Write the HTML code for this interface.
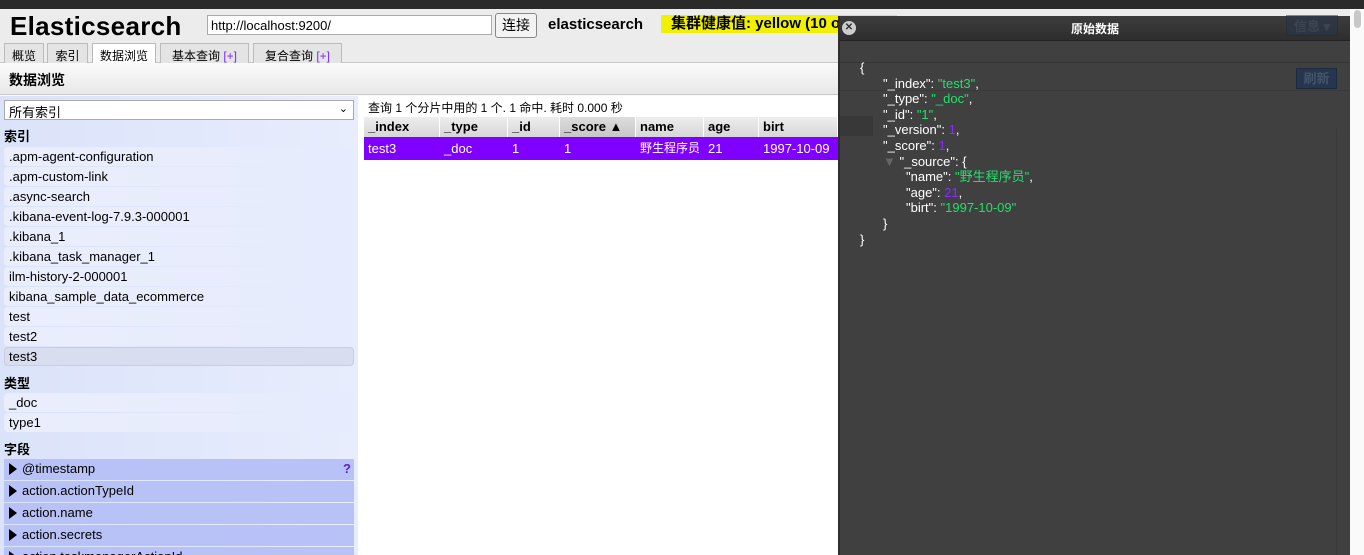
<!DOCTYPE html>
<html><head><meta charset="utf-8"><style>
*{box-sizing:border-box;margin:0;padding:0}
html,body{width:1364px;height:555px;overflow:hidden}
body{position:relative;background:#fafafa;font-family:"Liberation Sans","Noto Sans CJK SC",sans-serif;font-size:13px;color:#000;white-space:nowrap}
.topbar{position:absolute;left:0;top:0;width:1364px;height:9px;background:#2a2a2a}
.head{position:absolute;left:0;top:9px;width:1350px;height:54px;background:#ececec;border-bottom:1px solid #c8c8c8}
.logo{position:absolute;left:10px;top:2px;font-size:26px;font-weight:bold;letter-spacing:0.3px}
.url{position:absolute;left:207px;top:6px;width:285px;height:20px;border:1px solid #aaa;background:#fff;font-size:13px;padding:2px 3px}
.btn{position:absolute;left:495px;top:4px;width:42px;height:25px;border:1px solid #888;border-radius:3px;background:#f3f3f3;font-size:14px;text-align:center;line-height:23px}
.cname{position:absolute;left:548px;top:7px;font-size:15px;font-weight:bold}
.health{position:absolute;left:661px;top:6px;width:236px;height:18px;background:#f0f000;font-size:15px;font-weight:bold;padding-left:10px;line-height:18px;overflow:hidden}
.tabs{position:absolute;top:34px;left:4px;height:20px}
.tab{position:absolute;top:0;height:21px;border:1px solid #bbb;border-bottom:none;background:#e4e4e4;font-size:12px;padding:3px 0 0;text-align:center}
.tab.on{background:#fff;height:22px}
.tab b{font-weight:normal;color:#7a28ff}
.sub{position:absolute;left:0;top:63px;width:1350px;height:32px;background:linear-gradient(#fafafa,#e8e8e8);border-bottom:1px solid #c8c8c8}
.sub span{position:absolute;left:9px;top:7px;font-size:14px;font-weight:bold}
.side{position:absolute;left:0;top:96px;width:358px;height:459px;background:linear-gradient(90deg,#dbe3fa,#e8edfd);overflow:hidden}
.sel{position:absolute;left:4px;top:4px;width:350px;height:20px;border:1px solid #aaa;background:#fff;font-size:13px;padding:1px 4px}
.sel i{position:absolute;right:5px;top:1px;font-style:normal;font-size:11px}
.lab{position:absolute;left:4px;font-size:13px;font-weight:bold}
.it{position:absolute;left:4px;width:350px;height:19px;border-radius:4px;background:linear-gradient(90deg,#eaeefc,#e6ebfd);padding:2px 5px;font-size:13px}
.it.s{background:#d8ddef;border:1px solid #ccd;padding:1px 4px}
.f{position:absolute;left:4px;width:350px;height:21px;background:#b8c2f7;padding:2px 5px;font-size:13px}
.f:before{content:"";display:inline-block;border-left:8px solid #000;border-top:6px solid transparent;border-bottom:6px solid transparent;margin-right:5px;vertical-align:-2px}
.main{position:absolute;left:358px;top:96px;width:480px;height:459px;background:#fff}
.info{position:absolute;left:368px;top:99px;font-size:12px}
.th{position:absolute;top:117px;height:20px;background:linear-gradient(#eee,#d6d6d6);border-right:1px solid #fff;font-weight:bold;font-size:13px;padding:2px 4px;overflow:hidden}
.td{position:absolute;top:137px;height:23px;background:#8000ff;color:#fff;font-size:13px;padding:4px 4px;line-height:15px;overflow:hidden}
.dlg{position:absolute;left:838px;top:16px;width:512px;height:539px;background:#404040;border-left:2px solid #2e2e2e}
.dt{position:absolute;left:0;top:0;width:510px;height:25px;background:linear-gradient(rgba(60,60,60,.92),rgba(45,45,45,.95));border-bottom:1px solid #222;color:#fff;font-weight:bold;font-size:12px;text-align:center;line-height:27px}
.x{position:absolute;left:2px;top:5px;width:14px;height:14px;border-radius:50%;background:#ccc;color:#333;font-size:10px;line-height:14px;text-align:center;font-weight:bold}
.json{position:absolute;left:20px;top:44px;color:#fff;font-size:13px;line-height:15.6px}
.json div{height:15.6px}
.i1{padding-left:23px}.i2{padding-left:46px}
.g{color:#22e06a}.p{color:#8a2cff}
.ghost{position:absolute;background:#26364e;border:1px solid #1d2a3e;color:#44546a;font-weight:bold;font-size:13px;text-align:center}
.scr{position:absolute;left:1354px;top:10px;width:7px;height:18px;border-radius:4px;background:#c8c8c8}
</style></head><body>
<div class="topbar"></div>
<div class="head">
<div class="logo">Elasticsearch</div>
<div class="url">http://localhost:9200/</div>
<div class="btn">连接</div>
<div class="cname">elasticsearch</div>
<div class="health">集群健康值: yellow (10 of 13)</div>
<div class="tabs">
<div class="tab" style="left:0;width:40px">概览</div>
<div class="tab" style="left:43px;width:41px">索引</div>
<div class="tab on" style="left:88px;width:64px">数据浏览</div>
<div class="tab" style="left:156px;width:89px">基本查询 <b>[+]</b></div>
<div class="tab" style="left:249px;width:89px">复合查询 <b>[+]</b></div>
</div>
</div>
<div class="sub"><span>数据浏览</span></div>
<div class="side">
<div class="sel">所有索引<i>⌄</i></div>
<div class="lab" style="top:30px">索引</div>
<div class="it" style="top:51px">.apm-agent-configuration</div>
<div class="it" style="top:71px">.apm-custom-link</div>
<div class="it" style="top:91px">.async-search</div>
<div class="it" style="top:111px">.kibana-event-log-7.9.3-000001</div>
<div class="it" style="top:131px">.kibana_1</div>
<div class="it" style="top:151px">.kibana_task_manager_1</div>
<div class="it" style="top:171px">ilm-history-2-000001</div>
<div class="it" style="top:191px">kibana_sample_data_ecommerce</div>
<div class="it" style="top:211px">test</div>
<div class="it" style="top:231px">test2</div>
<div class="it s" style="top:251px">test3</div>
<div class="lab" style="top:277px">类型</div>
<div class="it" style="top:297px">_doc</div>
<div class="it" style="top:317px">type1</div>
<div class="lab" style="top:343px">字段</div>
<div class="f" style="top:363px">@timestamp<span style="position:absolute;right:3px;color:#6020d0;font-weight:bold">?</span></div>
<div class="f" style="top:385px">action.actionTypeId</div>
<div class="f" style="top:407px">action.name</div>
<div class="f" style="top:429px">action.secrets</div>
<div class="f" style="top:451px">action.taskmanagerActionId</div>
</div>
<div class="main"></div>
<div class="info">查询 1 个分片中用的 1 个. 1 命中. 耗时 0.000 秒</div>
<div class="th" style="left:364px;width:76px">_index</div>
<div class="th" style="left:440px;width:68px">_type</div>
<div class="th" style="left:508px;width:52px">_id</div>
<div class="th" style="left:560px;width:76px;background:linear-gradient(#ddd,#c6c6c6)">_score ▲</div>
<div class="th" style="left:636px;width:68px">name</div>
<div class="th" style="left:704px;width:55px">age</div>
<div class="th" style="left:759px;width:79px">birt</div>
<div class="td" style="left:364px;width:76px">test3</div>
<div class="td" style="left:440px;width:68px">_doc</div>
<div class="td" style="left:508px;width:52px">1</div>
<div class="td" style="left:560px;width:76px">1</div>
<div class="td" style="left:636px;width:68px;font-size:12px">野生程序员</div>
<div class="td" style="left:704px;width:55px">21</div>
<div class="td" style="left:759px;width:79px">1997-10-09</div>
<div class="scr"></div>
<div class="dlg">
<div class="dt">原始数据</div>
<div class="x">✕</div>
<div style="position:absolute;left:0;top:46px;width:510px;border-top:1px solid #363636"></div>
<div style="position:absolute;left:0;top:74px;width:510px;border-top:1px solid #3a3a3a"></div>
<div class="ghost" style="left:446px;top:-1px;width:52px;height:21px;opacity:.5">信息 ▾</div>
<div class="ghost" style="left:456px;top:52px;width:41px;height:21px;line-height:19px">刷新</div>
<div style="position:absolute;left:0;top:100px;width:33px;height:20px;background:#383838"></div>
<div style="position:absolute;left:496px;top:113px;height:430px;border-left:1px solid #3a3a3a"></div>
<div class="json">
<div>{</div>
<div class="i1">"_index": <span class="g">"test3"</span>,</div>
<div class="i1">"_type": <span class="g">"_doc"</span>,</div>
<div class="i1">"_id": <span class="g">"1"</span>,</div>
<div class="i1">"_version": <span class="p">1</span>,</div>
<div class="i1">"_score": <span class="p">1</span>,</div>
<div class="i1"><span style="color:#666">▼</span> "_source": {</div>
<div class="i2">"name": <span class="g">"野生程序员"</span>,</div>
<div class="i2">"age": <span class="p">21</span>,</div>
<div class="i2">"birt": <span class="g">"1997-10-09"</span></div>
<div class="i1">}</div>
<div>}</div>
</div>
</div>
</body></html>
